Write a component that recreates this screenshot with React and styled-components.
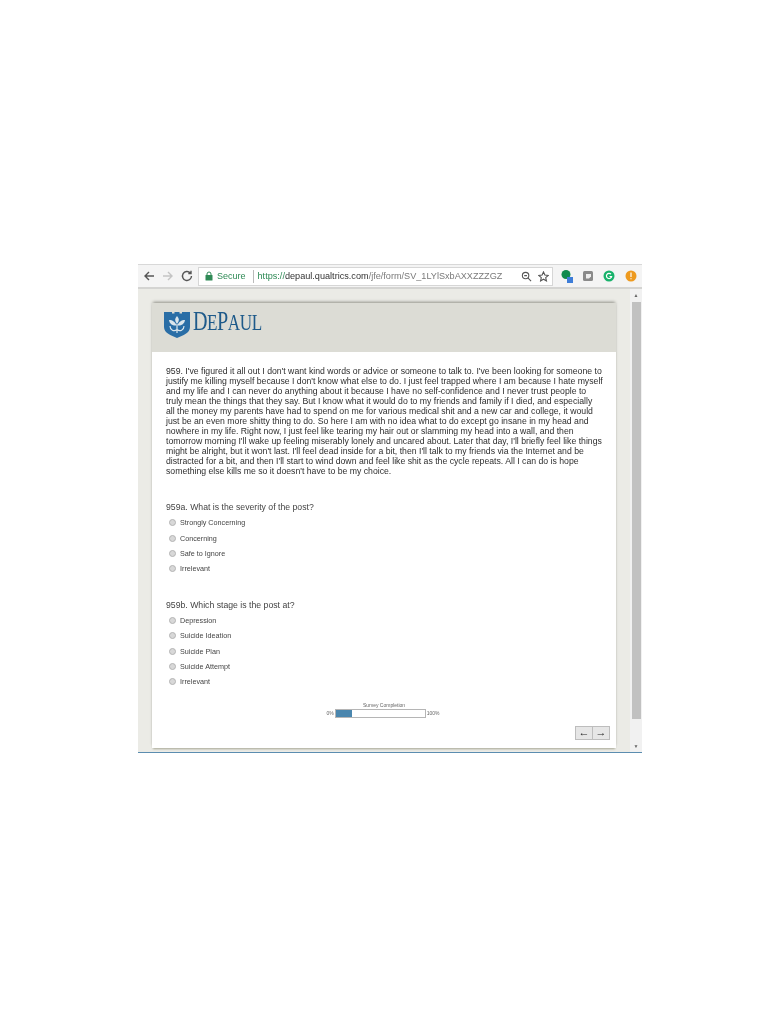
import React from 'react'
import styled, { createGlobalStyle } from 'styled-components'

const Global = createGlobalStyle`
  html, body { margin: 0; padding: 0; background: #fff; }
  body { font-family: "Liberation Sans", Arial, sans-serif; color: #3a3a3a; }
`

const Page = styled.div`
  width: 782px;
  height: 1012px;
  padding: 264px 0 0 138px;
  box-sizing: border-box;
  overflow: hidden;
`

const Shot = styled.div`
  width: 504px;
  height: 489px;
  display: flex;
  flex-direction: column;
  background: #ebebe6;
  border-bottom: 1px solid #5b8db0;
  box-sizing: border-box;
  filter: blur(0.4px);
`

const Toolbar = styled.div`
  height: 25px;
  flex: none;
  display: flex;
  align-items: center;
  background: #f4f4f4;
  border-top: 1px solid #d8d8d8;
  border-bottom: 2px solid #d4d4d2;
  box-sizing: border-box;
  padding: 0 5px;
`

const NavIcon = styled.svg`
  width: 12px;
  height: 12px;
  flex: none;
  margin-right: 7px;
  fill: none;
  stroke: ${p => p.$dim ? '#c4c4c4' : '#555'};
  stroke-width: 1.4;
`

const Omnibox = styled.div`
  width: 355px;
  height: 19px;
  flex: none;
  display: flex;
  align-items: center;
  margin-left: -2px;
  background: #fff;
  border: 1px solid #d6d6d6;
  box-sizing: border-box;
  padding: 0 3px 0 6px;
  font-size: 9px;
  white-space: nowrap;
`

const Secure = styled.span`
  color: #2f8a56;
  margin-left: 4px;
  padding-right: 7px;
  border-right: 1px solid #bbb;
  line-height: 13px;
`

const Url = styled.span`
  margin-left: 4px;
  color: #7a7a7a;
  flex: 1;
  font-size: 9.15px;
  b { font-weight: 400; color: #2f8a56; }
  i { font-style: normal; color: #333; }
`

const BoxIcon = styled.svg`
  width: 11px;
  height: 11px;
  flex: none;
  margin-left: 6px;
  fill: none;
  stroke: #555;
  stroke-width: 1.2;
`

const Extensions = styled.div`
  display: flex;
  align-items: center;
  gap: 9.4px;
  margin-left: 7.5px;
`

const ExtIcon = styled.svg`
  width: 12px;
  height: 14px;
  flex: none;
`

const Viewport = styled.div`
  flex: 1;
  min-height: 0;
  display: flex;
`

const Content = styled.div`
  flex: 1;
  padding: 14px 14px 0 14px;
  min-width: 0;
  display: flex;
`

const Card = styled.div`
  width: 464px;
  height: 445px;
  display: flex;
  flex-direction: column;
  background: #fff;
  box-shadow: 0 -2px 3px -1px #8f8f86, 0 2px 2px -1px #a8a896;
`

const Header = styled.div`
  height: 49px;
  flex: none;
  display: flex;
  align-items: center;
  background: #dcdcd5;
  padding: 0 0 6px 12px;
  box-sizing: border-box;
`

const Wordmark = styled.div`
  margin: 0 0 5px 3px;
  font-family: "Liberation Serif", serif;
  font-size: 27px;
  line-height: 28px;
  color: #1e5a8a;
  letter-spacing: -0.6px;
  white-space: nowrap;
  transform: scaleX(0.745);
  transform-origin: left center;
  span { font-size: 23px; }
`

const Body = styled.div`
  flex: 1;
  position: relative;
  display: flex;
  flex-direction: column;
  padding: 14px 14px 0 14px;
  box-sizing: border-box;
`

const Post = styled.div`
  font-size: 8.7px;
  line-height: 10px;
  color: #2e2e2e;
  white-space: nowrap;
`

const Question = styled.div`
  margin-top: ${p => p.$top}px;
  font-size: 8.7px;
  line-height: 12px;
  color: #444;
`

const Choices = styled.div`
  margin-top: 2px;
  display: flex;
  flex-direction: column;
`

const Choice = styled.div`
  height: 15.4px;
  display: flex;
  align-items: center;
  padding-left: 3px;
  font-size: 7.2px;
  color: #444;
`

const Radio = styled.span`
  width: 5px;
  height: 5px;
  flex: none;
  margin-right: 4px;
  border-radius: 50%;
  background: #d8d8d8;
  border: 1px solid #b4b4b4;
`

const Progress = styled.div`
  margin-top: 12px;
  display: flex;
  flex-direction: column;
  align-items: center;
  font-size: 5px;
  color: #666;
`

const ProgressRow = styled.div`
  display: flex;
  align-items: center;
  gap: 1px;
  margin-top: 1px;
  margin-left: -2px;
`

const Track = styled.div`
  width: 91px;
  height: 9px;
  background: #fff;
  border: 1px solid #b5b5b5;
  box-sizing: border-box;
`

const Fill = styled.div`
  height: 100%;
  background: #4a86ae;
`

const Buttons = styled.div`
  align-self: flex-end;
  margin: 8px -8px 0 0;
  display: flex;
`

const NavButton = styled.div`
  width: 18px;
  height: 14px;
  display: flex;
  align-items: center;
  justify-content: center;
  background: #e6e6e6;
  border: 1px solid #bdbdbd;
  margin-left: -1px;
  box-sizing: border-box;
  font-size: 11px;
  line-height: 1;
  color: #222;
`

const Scrollbar = styled.div`
  width: 12px;
  flex: none;
  display: flex;
  flex-direction: column;
  align-items: center;
  background: #f1f1f1;
`

const Arrow = styled.span`
  height: ${p => p.$h}px;
  flex: none;
  font-size: 5px;
  line-height: 12px;
  color: #666;
`

const Thumb = styled.div`
  width: 9px;
  height: 417px;
  flex: none;
  background: #c1c1c1;
`

const Spacer = styled.div`
  flex: 1;
`

const postLines = [
  "959. I've figured it all out I don't want kind words or advice or someone to talk to. I've been looking for someone to",
  "justify me killing myself because I don't know what else to do. I just feel trapped where I am because I hate myself",
  'and my life and I can never do anything about it because I have no self-confidence and I never trust people to',
  'truly mean the things that they say. But I know what it would do to my friends and family if I died, and especially',
  'all the money my parents have had to spend on me for various medical shit and a new car and college, it would',
  'just be an even more shitty thing to do. So here I am with no idea what to do except go insane in my head and',
  'nowhere in my life. Right now, I just feel like tearing my hair out or slamming my head into a wall, and then',
  "tomorrow morning I'll wake up feeling miserably lonely and uncared about. Later that day, I'll briefly feel like things",
  "might be alright, but it won't last. I'll feel dead inside for a bit, then I'll talk to my friends via the Internet and be",
  "distracted for a bit, and then I'll start to wind down and feel like shit as the cycle repeats. All I can do is hope",
  "something else kills me so it doesn't have to be my choice.",
]

const severity = ['Strongly Concerning', 'Concerning', 'Safe to Ignore', 'Irrelevant']
const stage = ['Depression', 'Suicide Ideation', 'Suicide Plan', 'Suicide Attempt', 'Irrelevant']

function ChoiceList({ items }) {
  return (
    <Choices>
      {items.map(item => (
        <Choice key={item}><Radio />{item}</Choice>
      ))}
    </Choices>
  )
}

function Logo() {
  return (
    <svg width="26" height="27" viewBox="0 0 26 27">
      <path d="M0 1h8v1.500h2.500V1h5v1.500H18V1h8v15c0 6-7 8.500-13 11C7 24.500 0 22 0 16z" fill="#2a6ea6" />
      <path d="M13 5c-2.500 2.500-2.500 5 0 8 2.500-3 2.500-5.500 0-8zM5 9c.5 4 4 6 7.500 5.500C11.500 11 8.500 9 5 9zM21 9c-.5 4-4 6-7.500 5.500C14.500 11 17.500 9 21 9z" fill="#dce6ec" />
      <path d="M13 13v9M6 15c0 4 4 6 7 3.500C16 21 20 19 20 15" fill="none" stroke="#dce6ec" strokeWidth="1.200" />
    </svg>
  )
}

export default function App() {
  return (
    <Page>
      <Global />
      <Shot>
        <Toolbar>
          <NavIcon viewBox="0 0 12 12"><path d="M11 6H2M6 2 2 6l4 4" /></NavIcon>
          <NavIcon viewBox="0 0 12 12" $dim><path d="M1 6h9M6 2l4 4-4 4" /></NavIcon>
          <NavIcon viewBox="0 0 12 12"><path d="M10.500 6a4.500 4.500 0 1 1-1.300-3.200M10 .8v2.700H7.300" /></NavIcon>
          <Omnibox>
            <svg width="8" height="10" viewBox="0 0 8 10">
              <path d="M2 4.500V3a2 2 0 0 1 4 0v1.500" fill="none" stroke="#2f8a56" />
              <rect x="0.500" y="4" width="7" height="5.500" rx="0.500" fill="#2f8a56" />
            </svg>
            <Secure>Secure</Secure>
            <Url><b>https://</b><i>depaul.qualtrics.com</i>/jfe/form/SV_1LYlSxbAXXZZZGZ</Url>
            <BoxIcon viewBox="0 0 12 12"><circle cx="5" cy="5" r="3.500" /><path d="M7.500 7.500 11 11M3.500 5h3" /></BoxIcon>
            <BoxIcon viewBox="0 0 12 12"><path d="m6 1 1.500 3.400 3.700.4-2.800 2.400.8 3.600L6 9l-3.200 1.800.8-3.600L.8 4.800l3.700-.4z" /></BoxIcon>
          </Omnibox>
          <Extensions>
            <ExtIcon viewBox="0 0 12 14">
              <circle cx="5" cy="5.500" r="4.500" fill="#0f8a4e" />
              <rect x="6" y="8" width="6" height="6" fill="#3d7dd8" />
            </ExtIcon>
            <ExtIcon viewBox="0 0 12 14">
              <rect x="1" y="2" width="10" height="10" rx="1.500" fill="#8a8a8a" />
              <path d="M4 5h5v2.500L7 9.500H4z" fill="#eee" />
            </ExtIcon>
            <ExtIcon viewBox="0 0 12 14">
              <circle cx="6" cy="7" r="5.500" fill="#18b26b" />
              <path d="M8 5.200A2.600 2.600 0 1 0 8.600 7.500H6.500" fill="none" stroke="#fff" strokeWidth="1.200" />
            </ExtIcon>
            <ExtIcon viewBox="0 0 12 14">
              <circle cx="6" cy="7" r="5.500" fill="#ee9a1f" />
              <path d="M6 3.500v4.500M6 9.300v1" stroke="#fff" strokeWidth="1.200" />
            </ExtIcon>
          </Extensions>
        </Toolbar>
        <Viewport>
          <Content>
            <Card>
              <Header>
                <Logo />
                <Wordmark>D<span>E</span>P<span>AUL</span></Wordmark>
              </Header>
              <Body>
                <Post>
                  {postLines.map(line => <div key={line}>{line}</div>)}
                </Post>
                <Question $top={25}>959a. What is the severity of the post?</Question>
                <ChoiceList items={severity} />
                <Question $top={22}>959b. Which stage is the post at?</Question>
                <ChoiceList items={stage} />
                <Progress>
                  <div>Survey Completion</div>
                  <ProgressRow>
                    0%
                    <Track><Fill style={{ width: '18%' }} /></Track>
                    100%
                  </ProgressRow>
                </Progress>
                <Buttons>
                  <NavButton>←</NavButton>
                  <NavButton>→</NavButton>
                </Buttons>
              </Body>
            </Card>
          </Content>
          <Scrollbar>
            <Arrow $h={13}>▲</Arrow>
            <Thumb />
            <Spacer />
            <Arrow $h={12}>▼</Arrow>
          </Scrollbar>
        </Viewport>
      </Shot>
    </Page>
  )
}
